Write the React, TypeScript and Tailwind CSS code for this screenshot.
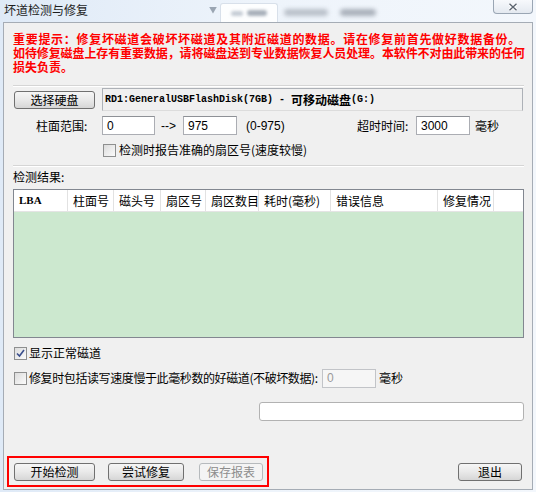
import React from "react";

const cjk = "font-['SimSun','Noto_Sans_CJK_SC',sans-serif]";

type Col = { label: string; w: string };

const columns: Col[] = [
  { label: "LBA", w: "w-[54px]" },
  { label: "柱面号", w: "w-[46px]" },
  { label: "磁头号", w: "w-[47px]" },
  { label: "扇区号", w: "w-[45px]" },
  { label: "扇区数目", w: "w-[53px]" },
  { label: "耗时(毫秒)", w: "w-[72px]" },
  { label: "错误信息", w: "w-[107px]" },
  { label: "修复情况", w: "w-[56px]" },
];

function WinButton({
  children,
  width,
  disabled = false,
}: {
  children: React.ReactNode;
  width: string;
  disabled?: boolean;
}) {
  return (
    <button
      className={`${width} h-[18px] rounded-[3px] border text-[12px] leading-none flex items-center justify-center ${
        disabled
          ? "border-[#b6babd] bg-[#f4f4f4] text-[#8d8d8d]"
          : "border-[#707070] bg-gradient-to-b from-[#f6f6f6] via-[#e9e9e9] to-[#d6d6d6] text-black"
      }`}
    >
      {children}
    </button>
  );
}

function CheckBox({ checked = false }: { checked?: boolean }) {
  return (
    <span className="w-[13px] h-[13px] border border-[#8e8f8f] bg-gradient-to-br from-[#dcdcdc] to-[#fbfbfb] flex items-center justify-center shrink-0">
      {checked && (
        <svg width="9" height="9" viewBox="0 0 9 9">
          <path d="M1 4.5 L3.5 7 L8 1" fill="none" stroke="#3a4e8c" strokeWidth="1.6" />
        </svg>
      )}
    </span>
  );
}

function TextBox({ value, width, disabled = false }: { value: string; width: string; disabled?: boolean }) {
  return (
    <div
      className={`${width} h-[19px] shrink-0 border flex items-center px-[4px] text-[12px] font-['Liberation_Sans',sans-serif] ${
        disabled
          ? "border-[#c2c4c8] bg-[#f6f6f6] text-[#9a9a9a]"
          : "border-[#abadb3] border-t-[#8e9196] bg-white text-black"
      }`}
    >
      {value}
    </div>
  );
}

function Etched() {
  return <div className="h-[2px] border-t border-[#d5d5d5] border-b border-b-white" />;
}

export default function App() {
  return (
    <div className={`w-[536px] h-[492px] flex flex-col bg-gradient-to-r from-[#dfeaf7] via-[#eef4fb] to-[#f3f7fc] text-[12px] text-black ${cjk}`}>
      {/* Title bar */}
      <div className="relative h-[22px] shrink-0 flex items-start">
        <span className="ml-[4px] mt-[3px] text-[12px] leading-[13px] text-[#1e1e1e]">坏道检测与修复</span>
        <span className="ml-[121px] mt-[4px] text-[8px] text-[#9aa5b2] blur-[0.6px]">▼</span>
        {/* tabs of the window behind, out of focus */}
        <div className="ml-[3px] mt-[3px] w-[58px] h-[19px] rounded-t-[3px] bg-white/90 border border-[#d8e0ea] border-b-0 flex items-center justify-center gap-[4px]">
          <span className="w-[12px] h-[5px] bg-[#c5ccd5] rounded-sm blur-[1.5px]" />
          <span className="w-[20px] h-[6px] bg-[#a9b1bb] rounded-sm blur-[1.5px]" />
        </div>
        <div className="ml-[6px] mt-[9px] w-[44px] h-[7px] bg-[#b9c0c9] rounded-sm blur-[2px]" />
        <div className="ml-[12px] mt-[9px] w-[36px] h-[7px] bg-[#a9b0ba] rounded-sm blur-[2px]" />
        <div className="absolute right-[3px] top-0 w-[40px] h-[14px] rounded-b-[4px] border border-t-0 border-[#9aa6b4] bg-gradient-to-b from-[#f7f9fc] to-[#e4e9f0] flex items-center justify-center">
          <svg width="10" height="8" viewBox="0 0 10 8">
            <path d="M1.5 0.8 L8.5 7.2 M8.5 0.8 L1.5 7.2" stroke="#ffffff" strokeWidth="3" />
            <path d="M1.5 0.8 L8.5 7.2 M8.5 0.8 L1.5 7.2" stroke="#5b6470" strokeWidth="1.4" />
          </svg>
        </div>
      </div>

      {/* Client area */}
      <div className="mx-[3px] mb-[2px] flex-1 flex flex-col border border-[#a5acb5] bg-[#f0f0f0] pl-[9px] pr-[8px]">
        <div className="mt-[9px] text-[12px] leading-[14px] font-bold text-[#ff0000] whitespace-nowrap">
          <div className="tracking-[0.7px]">重要提示：修复坏磁道会破坏坏磁道及其附近磁道的数据。请在修复前首先做好数据备份。</div>
          <div className="tracking-[-0.1px]">如待修复磁盘上存有重要数据，请将磁盘送到专业数据恢复人员处理。本软件不对由此带来的任何</div>
          <div>损失负责。</div>
        </div>

        <div className="mt-[11px]">
          <Etched />
        </div>

        {/* Disk selection */}
        <div className="mt-[1px] flex items-center">
          <div className="ml-[1px]">
            <WinButton width="w-[81px]">选择硬盘</WinButton>
          </div>
          <div className="ml-[7px] w-[421px] h-[23px] border border-[#adb1b7] border-b-[#dcdcdc] bg-[#f0f0f0] flex items-center pl-[2px] font-bold whitespace-pre">
            <span className="font-['Liberation_Mono',monospace] text-[10px]">RD1:GeneralUSBFlashDisk(7GB) - </span>
            <span className="text-[12px]">可移动磁盘</span>
            <span className="font-['Liberation_Mono',monospace] text-[10px]">(G:)</span>
          </div>
        </div>

        {/* Cylinder range and timeout */}
        <div className="mt-[5px] flex items-center h-[19px]">
          <span className="ml-[23px] w-[66px]">柱面范围:</span>
          <TextBox value="0" width="w-[53px]" />
          <span className="ml-[6px] w-[22px] font-['Liberation_Sans',sans-serif]">--&gt;</span>
          <TextBox value="975" width="w-[54px]" />
          <span className="ml-[9px] w-[111px] font-['Liberation_Sans',sans-serif]">(0-975)</span>
          <span className="w-[59px]">超时时间:</span>
          <TextBox value="3000" width="w-[54px]" />
          <span className="ml-[5px]">毫秒</span>
        </div>

        <div className="mt-[8px] ml-[90px] flex items-center gap-[3px] h-[14px]">
          <CheckBox />
          <span>检测时报告准确的扇区号(速度较慢)</span>
        </div>

        <div className="mt-[8px]">
          <Etched />
        </div>

        <div className="mt-[3px] leading-[14px]">检测结果:</div>

        {/* Result list */}
        <div className="mt-[5px] h-[149px] border border-[#828790] bg-[#cce8cf] flex flex-col">
          <div className="h-[22px] bg-white flex border-b border-[#e4e4e4]">
            {columns.map((c) => (
              <div
                key={c.label}
                className={`${c.w} shrink-0 border-r border-[#e2e2e2] flex items-center pl-[5px] whitespace-nowrap overflow-hidden ${
                  c.label === "LBA" ? "font-['Liberation_Serif',serif] text-[11px] font-bold" : ""
                }`}
              >
                {c.label}
              </div>
            ))}
            <div className="flex-1" />
          </div>
        </div>

        <div className="mt-[8px] ml-[1px] flex items-center gap-[2px] h-[14px]">
          <CheckBox checked />
          <span>显示正常磁道</span>
        </div>

        <div className="mt-[8px] ml-[1px] flex items-center h-[20px]">
          <CheckBox />
          <span className="ml-[2px] w-[293px] shrink-0 whitespace-nowrap tracking-[-0.4px]">修复时包括读写速度慢于此毫秒数的好磁道(不破坏数据):</span>
          <TextBox value="0" width="w-[54px]" disabled />
          <span className="ml-[3px]">毫秒</span>
        </div>

        {/* Progress bar */}
        <div className="mt-[14px] ml-[246px] w-[265px] h-[19px] rounded-[3px] border border-[#b2b2b2] bg-white" />

        <div className="flex-1" />

        {/* Action buttons */}
        <div className="mb-[2px] flex items-end justify-between">
          <div className="-ml-[6px] border-2 border-[#ff0000] flex gap-[13px] pl-[5px] pr-[4px] pt-[5px] pb-[4px]">
            <WinButton width="w-[81px]">开始检测</WinButton>
            <WinButton width="w-[76px]">尝试修复</WinButton>
            <div className="ml-[2px]">
              <WinButton width="w-[64px]" disabled>
                保存报表
              </WinButton>
            </div>
          </div>
          <div className="mb-[6px] mr-[2px]">
            <WinButton width="w-[64px]">退出</WinButton>
          </div>
        </div>
      </div>
    </div>
  );
}
